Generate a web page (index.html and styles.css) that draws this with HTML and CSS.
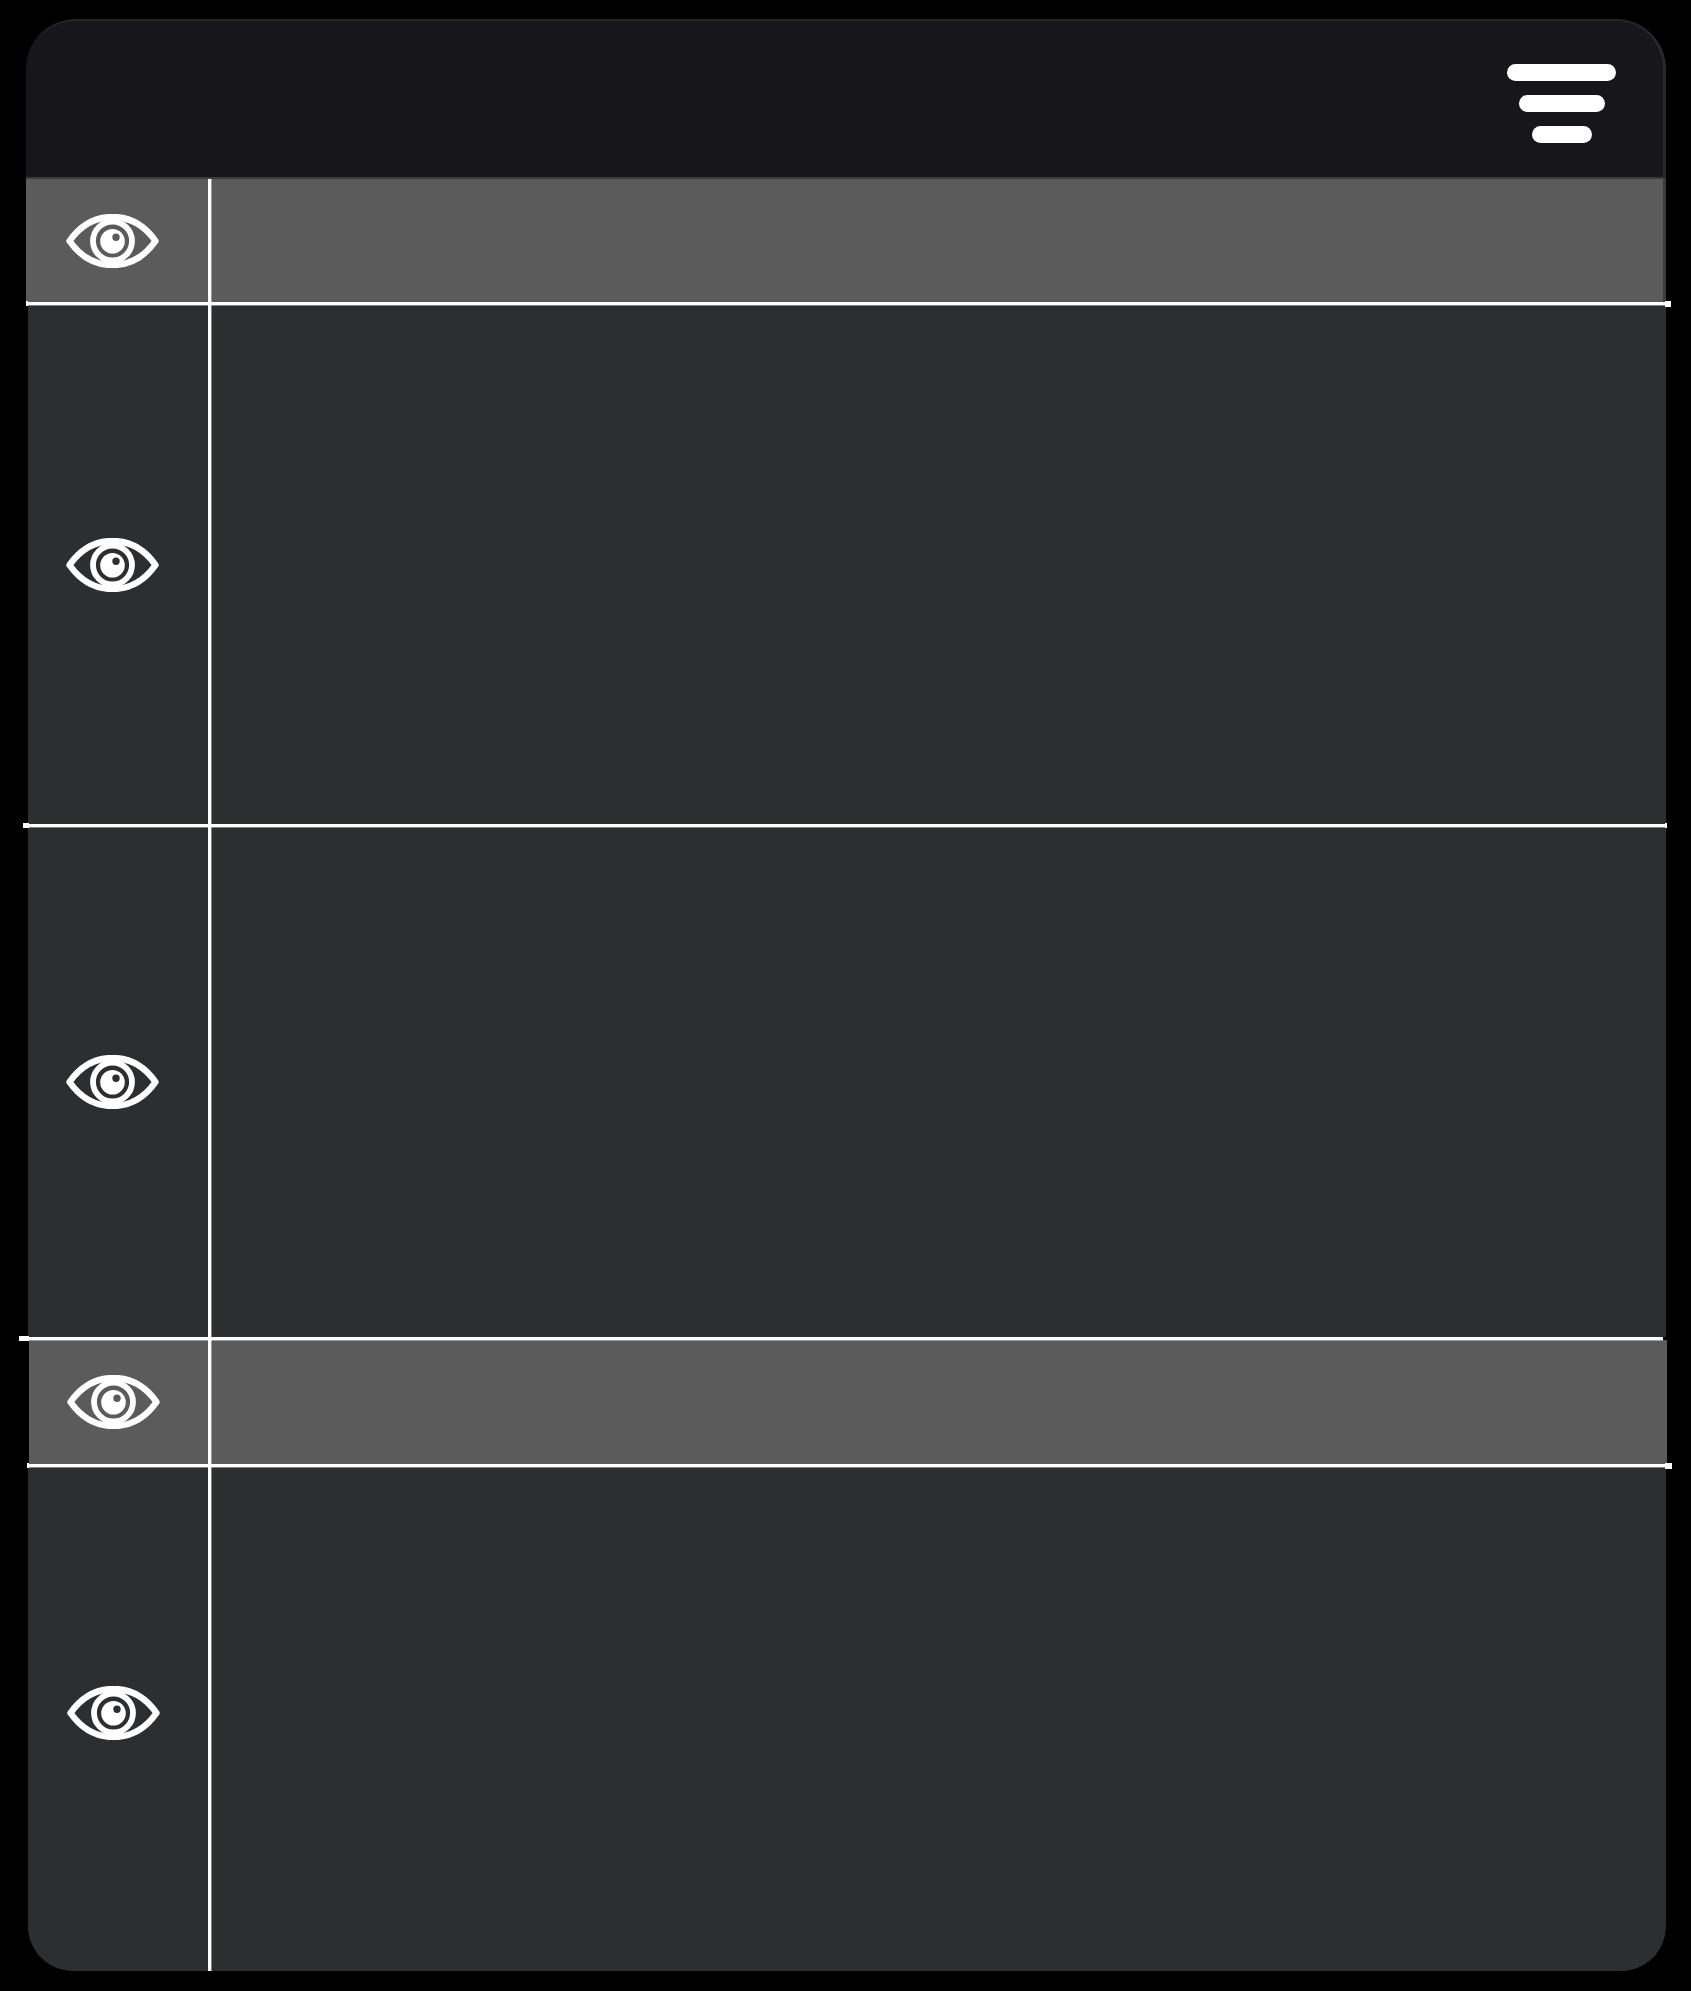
FILE: index.html
```html
<!DOCTYPE html>
<html lang="en">
  <head>
    <meta charset="UTF-8" />
    <meta name="viewport" content="width=device-width, initial-scale=1.0" />
    <title>Layers</title>
    <link rel="stylesheet" href="styles.css">
  </head>
  <body>
    <svg class="defs" width="0" height="0" aria-hidden="true">
      <symbol id="eye" viewBox="0 0 93 54">
        <path class="eye-line eye-outline" d="M3.5 27C14 12 29 3 46.5 3S79 12 89.5 27C79 42 64 51 46.5 51S14 42 3.5 27Z" />
        <circle class="eye-line" cx="46.5" cy="27" r="19.5" />
        <path class="eye-pupil" fill-rule="evenodd" d="M46.5 15a12.3 12.3 0 1 0 0 24.6a12.3 12.3 0 1 0 0-24.6ZM50 19.6a3.7 3.7 0 1 0 0 7.4a3.7 3.7 0 1 0 0-7.4Z" />
      </symbol>
    </svg>

    <div class="panel">
      <div class="panel-header">
        <button class="filter-btn" aria-label="Filter">
          <span class="bar bar-long"></span>
          <span class="bar bar-mid"></span>
          <span class="bar bar-short"></span>
        </button>
      </div>

      <div class="row row-first row-light">
        <div class="eye-cell"><svg class="eye"><use href="#eye" /></svg></div>
      </div>
      <div class="rule rule-one"></div>

      <div class="row row-tall">
        <div class="eye-cell"><svg class="eye"><use href="#eye" /></svg></div>
      </div>
      <div class="rule rule-two"></div>

      <div class="row row-mid">
        <div class="eye-cell"><svg class="eye"><use href="#eye" /></svg></div>
      </div>
      <div class="rule rule-three"></div>

      <div class="row row-shifted row-light">
        <div class="eye-cell"><svg class="eye"><use href="#eye" /></svg></div>
      </div>
      <div class="rule rule-four"></div>

      <div class="row row-last">
        <div class="eye-cell"><svg class="eye"><use href="#eye" /></svg></div>
      </div>
    </div>
  </body>
</html>
```

FILE: styles.css
```css
* {
  box-sizing: border-box;
  margin: 0;
  padding: 0;
}

html,
body {
  background-color: #000;
}

.defs {
  position: absolute;
}

.panel {
  width: 1640px;
  margin: 19px 0 20px 26px;
}

.panel-header {
  height: 160px;
  display: flex;
  justify-content: flex-end;
  padding: 43px 47px 0 0;
  background-color: #17171b;
  border-top: 2px solid #252527;
  border-right: 3px solid #29292b;
  border-bottom: 2px solid #3b3b3c;
  border-radius: 50px 50px 0 0;
}

.filter-btn {
  height: 79px;
  display: flex;
  flex-direction: column;
  align-items: center;
  gap: 14px;
  background: none;
  border: none;
}

.bar {
  height: 17px;
  background-color: #fff;
  border-radius: 9px;
}

.bar-long {
  width: 109px;
}

.bar-mid {
  width: 86px;
}

.bar-short {
  width: 60px;
}

/* rows */
.row {
  display: flex;
  margin-left: 2px;
  background-color: #2d2e30;
}

.row-light {
  height: 123px;
  background-color: #5b5b5b;
}

.row-first {
  margin-left: 0;
  border-right: 3px solid #3b3b3c;
}

.row-tall {
  height: 519px;
}

.row-mid {
  height: 510px;
}

.row-shifted {
  height: 124px;
  margin-left: 3px;
  margin-right: -1px;
}

.row-last {
  height: 504px;
  border-radius: 0 0 45px 45px;
}

.eye-cell {
  width: 183px;
  display: flex;
  align-items: center;
  padding-left: 38px;
  border-right: 3px solid #fff;
  box-shadow: 1px 0 0 #ffffff66;
}

.row-first .eye-cell {
  width: 185px;
  padding-left: 40px;
}

.row-shifted .eye-cell {
  width: 182px;
}

.row-last .eye-cell {
  padding-left: 39px;
  padding-bottom: 12px;
}

.eye {
  width: 93px;
  height: 54px;
}

.eye-line {
  fill: none;
  stroke: #fff;
  stroke-width: 5.8;
  stroke-linejoin: round;
}

.eye-outline {
  stroke-width: 6.4;
}

.eye-pupil {
  fill: #fff;
}

/* white rules, they stick out of the panel a little */
.rule {
  position: relative;
  height: 3px;
  background-color: #fff;
  box-shadow: 0 1px 0 #ffffff66;
}

.rule::before,
.rule::after {
  content: "";
  position: absolute;
  top: -1px;
  height: 5px;
  background-color: #fff;
}

.rule::before {
  left: 0;
  width: 2px;
}

.rule::after {
  right: 0;
  width: 2px;
}

.rule-one {
  margin-right: -5px;
}

.rule-one::after {
  width: 6px;
  height: 6px;
}

.rule-two {
  margin: 0 -1px 0 -3px;
}

.rule-two::before {
  width: 6px;
}

.rule-three {
  margin: 0 3px 0 -7px;
}

.rule-three::before {
  width: 10px;
}

.rule-three::after {
  display: none;
}

.rule-four {
  margin: 0 -6px 0 1px;
}

.rule-four::after {
  width: 7px;
  height: 6px;
}
```
